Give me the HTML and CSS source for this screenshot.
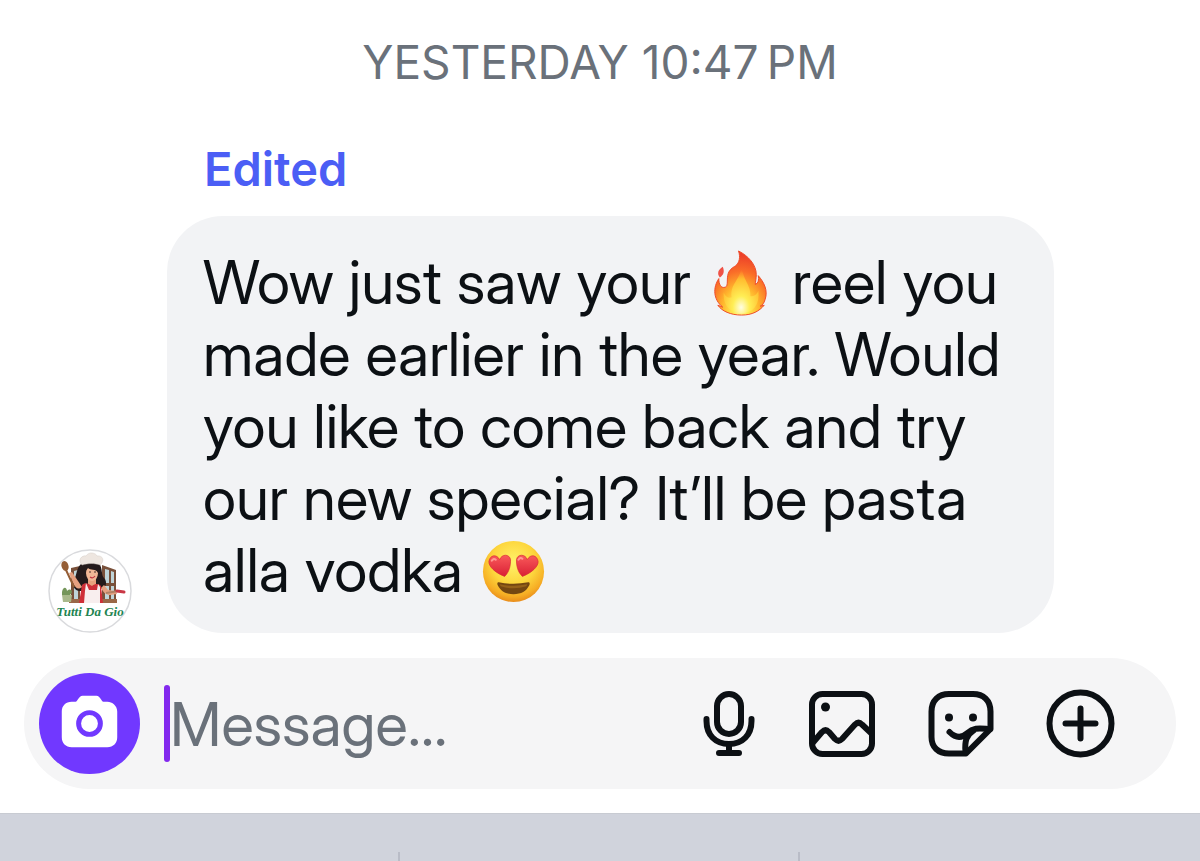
FILE: index.html
```html
<!DOCTYPE html>
<html lang="en">
<head>
<meta charset="utf-8">
<meta name="viewport" content="width=device-width, initial-scale=1">
<title>Messages</title>
<link rel="stylesheet" href="styles.css">
</head>
<body>
<main class="chat">
  <time class="timestamp">YESTERDAY 10:47&#8201;PM</time>
  <article class="message">
    <svg class="avatar" viewBox="0 0 84 84" role="img" aria-label="Tutti Da Gio">
      <circle cx="42" cy="42" r="41" fill="#fff" stroke="#d9dadd" stroke-width="1.5"/>
      <path d="M23 19l9-2v36h-9zM54 16l14 5v32H54z" fill="#79503a"/>
      <path d="M26 22l4-1v13h-4zM26 37h4v13h-4zM57 20l4 1v13h-4zM63 22l3 1v11h-3zM57 37h4v13h-4zM63 37h3v13h-3z" fill="#bfd4d8"/>
      <path d="M21 50h48v4H21z" fill="#9a6848"/>
      <path d="M34 14c-6 5-5 12-8 17-3 5 1 12 7 11l19-2c6 0 8-7 4-11-3-3-1-9-5-15z" fill="#241a1b"/>
      <path d="M40 28h8v10h-8z" fill="#e8a27d"/>
      <path d="M34 36c3-3 6-2 10 1 4-3 7-2 9 0l2 17H31z" fill="#cf2f38"/>
      <path d="M38 34l3 7h8l1-6 2 3v16H36l1-12z" fill="#f8eeee"/>
      <path d="M34 38c-4 3-6 1-8-2l-5-12 3-1 6 9M53 39c3 5 5 7 9 7l7-1-1-3-8-1-4-5" fill="#e6a080"/>
      <ellipse cx="44" cy="24" rx="6" ry="8" fill="#f2b795"/>
      <path d="M37 23c-2-8 3-9 7-8 6 0 8 4 6 9-2-5-8-2-10-5z" fill="#241a1b"/>
      <path d="M41 23h2m3 0h2" stroke="#49312b" stroke-width="1.2"/>
      <path d="M42 28q3 2 5-1" fill="none" stroke="#c33440" stroke-width="1.2"/>
      <path d="M34 16c-5-5 0-10 4-9 3-5 10-3 11 0 6-1 8 5 3 9-5-2-12-2-18 0z" fill="#eee6e0" stroke="#d5ccc6" stroke-width=".5"/>
      <ellipse cx="17" cy="17" rx="3.500" ry="5" fill="#945d35" transform="rotate(-18 17 17)"/>
      <path d="M18 21l8 17" stroke="#945d35" stroke-width="2"/>
      <path d="M58 44l13-2" stroke="#b08265" stroke-width="2"/>
      <path d="M69 42l7 1" stroke="#c93846" stroke-width="3" stroke-linecap="round"/>
      <path d="M14 43c1-6 5-5 5-1 4-4 7 1 3 4h-8z" fill="#75965a"/>
      <path d="M14 46h10l-1 7h-8z" fill="#a9b98b"/>
      <text class="avatar-name" x="42" y="67" text-anchor="middle">Tutti Da Gio</text>
    </svg>
    <div class="message-body">
      <span class="edited">Edited</span>
      <p class="bubble">Wow just saw your <svg class="emoji" viewBox="0 0 72 72" role="img" aria-label="fire">
        <defs>
          <radialGradient id="flame" cx="50%" cy="91%" r="85%">
            <stop offset="0" stop-color="#fff9bd"/><stop offset=".18" stop-color="#ffe94f"/><stop offset=".42" stop-color="#ffb52c"/><stop offset=".7" stop-color="#fa6d28"/><stop offset="1" stop-color="#ec3f29"/>
          </radialGradient>
          <radialGradient id="flame-core" cx="50%" cy="88%" r="80%">
            <stop offset="0" stop-color="#fffde3"/><stop offset=".3" stop-color="#ffee55"/><stop offset=".75" stop-color="#ffbd2f"/><stop offset="1" stop-color="#ff982b" stop-opacity="0"/>
          </radialGradient>
        </defs>
        <path d="M33 2c10 5 18 14 18 24 0 4-1 7-1 10 3-1 4-5 3-9 6 7 10 15 7 24-1 4-3 6-5 7l4-1c-5 6-12 10-23 10S16 63 12 57l5 2C7 51 7 39 13 30c0 6 2 9 5 9 5 0 3-6 4-12 1-6 5-8 8-10 4-3 5-9 3-15z" fill="url(#flame)" stroke="#ee4b2a" stroke-width="1"/>
        <path d="M36 17c1 14 10 20 9 31 4 0 7-2 8-6 2 15-6 23-17 23S17 57 18 44c2 5 5 6 8 5-2-14 9-17 10-32z" fill="url(#flame-core)"/>
        <path d="M17 18c-5 3-6 7-3 11 4-3 5-6 3-11z" fill="#ef5146"/>
      </svg> reel you made earlier in the year. Would you like to come back and try our new special? It’ll be pasta alla vodka <svg class="emoji" viewBox="0 0 72 72" role="img" aria-label="smiling face with heart eyes">
        <defs>
          <radialGradient id="face" cx="50%" cy="35%" r="65%">
            <stop offset="0" stop-color="#fff36a"/><stop offset=".55" stop-color="#fdd63d"/><stop offset=".85" stop-color="#f6ad24"/><stop offset="1" stop-color="#e98c1b"/>
          </radialGradient>
          <linearGradient id="heart" x1="0" y1="0" x2="0" y2="1">
            <stop offset="0" stop-color="#f95a5a"/><stop offset="1" stop-color="#d91f35"/>
          </linearGradient>
        </defs>
        <circle cx="36" cy="35" r="31" fill="url(#face)"/>
        <path d="M21 46q15 3 30 0c1 0 2 1 1 3-3 6-8 9-16 9s-13-3-16-9c-1-2 0-3 1-3z" fill="#744711"/>
        <path d="M22 48q14 3 28 0l-1 2q-13 4-26 0z" fill="#956119"/>
        <path d="M27 40C17 36 11 30 11 25c1-7 8-8 11-2 2-6 10-6 11 0 0 6-1 12-6 17z" fill="url(#heart)" stroke="#d72b33" stroke-width=".7"/>
        <path d="M45 40c10-4 16-10 16-15-1-7-8-8-11-2-2-6-10-6-11 0 0 6 1 12 6 17z" fill="url(#heart)" stroke="#d72b33" stroke-width=".7"/>
        <path d="M14 24q2-3 4-1M41 23q2-3 4-1" fill="none" stroke="#ff9790" stroke-width="2" stroke-linecap="round"/>
      </svg></p>
    </div>
  </article>
  <form class="composer">
    <button class="camera" type="button" aria-label="Camera">
      <svg viewBox="0 0 102 102" aria-hidden="true">
        <path d="M33 29h4c2 0 3-6 7-6h14c4 0 5 6 7 6h4c5 0 10 4 10 10v26c0 6-4 10-10 10H33c-6 0-10-4-10-10V39c0-6 4-10 10-10z" fill="#fff"/>
        <circle cx="51" cy="51" r="11" fill="#fff" stroke="#7138ff" stroke-width="5"/>
      </svg>
    </button>
    <label class="field">
      <span class="caret"></span>
      <input class="field-input" type="text" placeholder="Message…" aria-label="Message">
    </label>
    <div class="actions">
      <button class="action action-narrow" type="button" aria-label="Voice message">
        <svg viewBox="10 2 52 68" aria-hidden="true">
          <rect x="24" y="6" width="24" height="40" rx="12"/>
          <path d="M13.500 31v2c0 14 9 23 22.500 23s22.500-9 22.500-23v-2M36 56v9M26 65h20"/>
        </svg>
      </button>
      <button class="action" type="button" aria-label="Photo">
        <svg viewBox="2 2 68 68" aria-hidden="true">
          <rect x="7" y="6" width="60" height="60" rx="10.500"/>
          <path d="M8 54.500l9-10.500q3.500-3.500 7 0l6 7q3.500 3.500 7 0L50 36.500q3.500-3.500 7 0l9 8.500"/>
          <circle class="solid" cx="20.500" cy="19" r="4.500"/>
        </svg>
      </button>
      <button class="action" type="button" aria-label="Sticker">
        <svg viewBox="2 2 68 68" aria-hidden="true">
          <path d="M41 65.500H24C13 65.500 6.500 59 6.500 49V23.500C6.500 12.500 13.500 6 24 6h24C58.500 6 65.500 12.500 65.500 23.500V41L41 65.500z"/>
          <path d="M24.500 44c6 6 12 6.500 18 1C49 39 55 40.500 65 41M40.500 64c-1-11 1-17 8-21.500"/>
          <circle class="solid" cx="24" cy="29.500" r="4"/>
          <circle class="solid" cx="48" cy="29.500" r="4"/>
        </svg>
      </button>
      <button class="action" type="button" aria-label="More options">
        <svg viewBox="2 2 68 68" aria-hidden="true">
          <circle cx="35.500" cy="35.500" r="31"/>
          <path d="M35.500 20.500v30M20.500 35.500h30"/>
        </svg>
      </button>
    </div>
  </form>
</main>
<footer class="keyboard">
  <span class="suggestion"></span>
  <span class="suggestion"></span>
  <span class="suggestion"></span>
</footer>
</body>
</html>
```
FILE: styles.css
```css
* {
  box-sizing: border-box;
}

body {
  margin: 0;
  min-height: 100vh;
  display: flex;
  flex-direction: column;
  background: #fff;
  color: #0c1014;
  font-family: Inter, "Liberation Sans", sans-serif;
}

.chat {
  display: flex;
  flex-direction: column;
  padding: 34px 24px 24px;
}

.timestamp {
  align-self: center;
  font-size: 46px;
  line-height: 56px;
  color: #6a717a;
}

.message {
  display: flex;
  align-items: flex-end;
  gap: 35px;
  margin: 51px 0 25px;
  padding: 0 122px 0 24px;
}

.avatar {
  flex: none;
  width: 84px;
  height: 84px;
}

.avatar-name {
  font-family: "Liberation Serif", serif;
  font-size: 13px;
  font-style: italic;
  font-weight: 700;
  fill: #218451;
}

.message-body {
  flex: 1;
}

.edited {
  display: block;
  padding-left: 37px;
  font-size: 47px;
  font-weight: 600;
  line-height: 56px;
  color: #4b5ef5;
}

.bubble {
  margin: 19px 0 0;
  padding: 30px 36px 27px;
  border-radius: 56px;
  background: #f2f3f5;
  font-family: "Inter Display", Inter, "Liberation Sans", sans-serif;
  font-size: 60px;
  line-height: 72px;
}

.emoji {
  width: 71px;
  height: 71px;
  margin: -2px 0;
  vertical-align: -14px;
}

.composer {
  display: flex;
  align-items: center;
  padding: 15px 61px 15px 15px;
  border-radius: 66px;
  background: #f5f5f6;
}

button {
  display: block;
  padding: 0;
  border: 0;
  background: none;
  color: inherit;
}

button svg {
  display: block;
  width: 100%;
  height: 100%;
}

.camera {
  flex: none;
  width: 101px;
  height: 101px;
  border-radius: 50%;
  background: #7138ff;
}

.field {
  flex: 1;
  min-width: 0;
  display: flex;
  align-items: center;
  margin: 0 24px;
}

.caret {
  flex: none;
  width: 6px;
  height: 77px;
  border-radius: 3px;
  background: #8329ee;
}

.field-input {
  flex: 1;
  min-width: 0;
  height: 77px;
  padding: 0;
  border: 0;
  outline: 0;
  background: none;
  color: inherit;
  font-family: "Inter Display", Inter, "Liberation Sans", sans-serif;
  font-size: 60px;
}

.field-input::placeholder {
  color: #6a717a;
  opacity: 1;
}

.actions {
  flex: none;
  display: flex;
  gap: 52px;
}

.action {
  width: 68px;
  height: 68px;
}

.action-narrow {
  width: 52px;
}

.action svg {
  fill: none;
  stroke: #0c1014;
  stroke-width: 6;
  stroke-linecap: round;
  stroke-linejoin: round;
  overflow: visible;
}

.action .solid {
  fill: #0c1014;
  stroke: none;
}

.keyboard {
  flex: 1;
  min-height: 48px;
  display: grid;
  grid-template-columns: repeat(3, 1fr);
  padding-top: 38px;
  border-top: 1px solid #c8cbd2;
  background: #d0d3dc;
}

.suggestion:not(:last-child) {
  border-right: 2px solid #b9bcc7;
}
```
